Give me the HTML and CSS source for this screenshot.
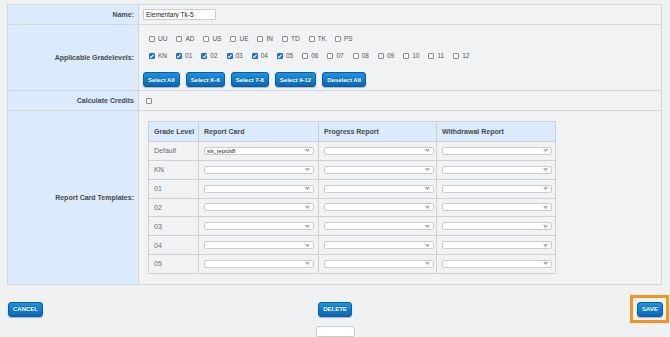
FILE: index.html
```html
<!DOCTYPE html>
<html lang="en">

<head>
  <meta charset="UTF-8" />
  <title>Report Card Group</title>
  <link rel="stylesheet" href="styles.css">
</head>

<body>
  <div class="page">
    <table class="form">
      <tr class="row-name">
        <th class="label">Name:</th>
        <td class="field"><input class="text-input" type="text" value="Elementary Tk-5"></td>
      </tr>
      <tr class="row-grades">
        <th class="label">Applicable Gradelevels:</th>
        <td class="field grades">
          <div class="cb-row">
            <label class="cb"><input type="checkbox">UU</label>
            <label class="cb"><input type="checkbox">AD</label>
            <label class="cb"><input type="checkbox">US</label>
            <label class="cb"><input type="checkbox">UE</label>
            <label class="cb"><input type="checkbox">IN</label>
            <label class="cb"><input type="checkbox">TD</label>
            <label class="cb"><input type="checkbox">TK</label>
            <label class="cb"><input type="checkbox">PS</label>
          </div>
          <div class="cb-row">
            <label class="cb"><input type="checkbox" checked>KN</label>
            <label class="cb"><input type="checkbox" checked>01</label>
            <label class="cb"><input type="checkbox" checked>02</label>
            <label class="cb"><input type="checkbox" checked>03</label>
            <label class="cb"><input type="checkbox" checked>04</label>
            <label class="cb"><input type="checkbox" checked>05</label>
            <label class="cb"><input type="checkbox">06</label>
            <label class="cb"><input type="checkbox">07</label>
            <label class="cb"><input type="checkbox">08</label>
            <label class="cb"><input type="checkbox">09</label>
            <label class="cb"><input type="checkbox">10</label>
            <label class="cb"><input type="checkbox">11</label>
            <label class="cb"><input type="checkbox">12</label>
          </div>
          <div class="btn-row">
            <button class="btn">Select All</button>
            <button class="btn">Select K-6</button>
            <button class="btn">Select 7-8</button>
            <button class="btn">Select 9-12</button>
            <button class="btn">Deselect All</button>
          </div>
        </td>
      </tr>
      <tr class="row-credits">
        <th class="label">Calculate Credits</th>
        <td class="field credits"><input type="checkbox"></td>
      </tr>
      <tr>
        <th class="label">Report Card Templates:</th>
        <td class="field templates">
          <table class="tpl">
            <colgroup>
              <col class="c-grade">
              <col class="c-card">
              <col class="c-prog">
              <col class="c-wd">
            </colgroup>
            <tr>
              <th>Grade Level</th>
              <th>Report Card</th>
              <th>Progress Report</th>
              <th>Withdrawal Report</th>
            </tr>
            <tr>
              <td>Default</td>
              <td><div class="sel"><select><option>sis_reprck8</option></select></div></td>
              <td><div class="sel"><select><option></option></select></div></td>
              <td><div class="sel"><select><option></option></select></div></td>
            </tr>
            <tr>
              <td>KN</td>
              <td><div class="sel"><select><option></option></select></div></td>
              <td><div class="sel"><select><option></option></select></div></td>
              <td><div class="sel"><select><option></option></select></div></td>
            </tr>
            <tr>
              <td>01</td>
              <td><div class="sel"><select><option></option></select></div></td>
              <td><div class="sel"><select><option></option></select></div></td>
              <td><div class="sel"><select><option></option></select></div></td>
            </tr>
            <tr>
              <td>02</td>
              <td><div class="sel"><select><option></option></select></div></td>
              <td><div class="sel"><select><option></option></select></div></td>
              <td><div class="sel"><select><option></option></select></div></td>
            </tr>
            <tr>
              <td>03</td>
              <td><div class="sel"><select><option></option></select></div></td>
              <td><div class="sel"><select><option></option></select></div></td>
              <td><div class="sel"><select><option></option></select></div></td>
            </tr>
            <tr>
              <td>04</td>
              <td><div class="sel"><select><option></option></select></div></td>
              <td><div class="sel"><select><option></option></select></div></td>
              <td><div class="sel"><select><option></option></select></div></td>
            </tr>
            <tr>
              <td>05</td>
              <td><div class="sel"><select><option></option></select></div></td>
              <td><div class="sel"><select><option></option></select></div></td>
              <td><div class="sel"><select><option></option></select></div></td>
            </tr>
          </table>
        </td>
      </tr>
    </table>

    <div class="actions">
      <div class="left">
        <button class="btn caps">Cancel</button>
      </div>
      <div class="middle">
        <button class="btn caps">Delete</button>
        <input class="small-input" type="text">
      </div>
      <div class="right">
        <span class="focus-box"><button class="btn caps">Save</button></span>
      </div>
    </div>
  </div>
</body>

</html>
```

FILE: styles.css
```css
body {
  margin: 0;
  background-color: #f0f1f3;
  color: #444;
  font-family: "Liberation Sans", Arial, sans-serif;
  font-size: 7px;
}

.page {
  padding: 4px 8px 0 7px;
}

/* main form table */
.form {
  width: 100%;
  border-collapse: collapse;
  border: 1px solid #d2d5d9;
}

.form > tbody > tr > th,
.form > tbody > tr > td {
  border: 1px solid #d2d5d9;
  padding: 0;
}

.label {
  width: 126px;
  background-color: #dcebfb;
  text-align: right;
  font-weight: bold;
  color: #454a50;
  padding-right: 4px !important;
}

.field {
  background-color: #f1f2f4;
  text-align: left;
}

.row-name {
  height: 20px;
}

.row-credits {
  height: 20px;
}

.text-input {
  display: block;
  box-sizing: border-box;
  margin-left: 4px;
  width: 73px;
  height: 11px;
  padding: 0 2px;
  border: 1px solid #c9ccd0;
  border-radius: 1px;
  background: #fff;
  font-family: "Liberation Sans", Arial, sans-serif;
  font-size: 6.5px;
  color: #222;
}

.grades {
  padding: 5px 0 3px 10px !important;
}

.cb-row {
  display: flex;
  align-items: center;
  height: 17px;
}

.cb {
  display: flex;
  align-items: center;
  gap: 3px;
  margin-right: 9px;
  font-size: 6.5px;
  color: #555;
}

/* small square checkbox */
input[type="checkbox"] {
  -webkit-appearance: none;
  appearance: none;
  position: relative;
  box-sizing: border-box;
  width: 6px;
  height: 6px;
  margin: 0;
  border: 1px solid #8a8d91;
  border-radius: 1px;
  background: #fff;
}

input[type="checkbox"]:checked {
  border-color: #1d6bd6;
  background: #2274e0;
}

input[type="checkbox"]:checked::before {
  content: "";
  position: absolute;
  left: 1.3px;
  top: 0;
  width: 1.2px;
  height: 2.6px;
  border-right: 1px solid #fff;
  border-bottom: 1px solid #fff;
  transform: rotate(40deg);
}

.btn-row {
  display: flex;
  gap: 6px;
  margin-top: 8px;
  margin-left: -6px;
}

.btn {
  height: 15px;
  padding: 0 4px;
  border: 1px solid #0a5c9e;
  border-radius: 3px;
  background: linear-gradient(#1f92e2, #0868b6);
  box-shadow: 0 1px 1px rgba(0, 0, 0, 0.25);
  color: #fff;
  font-family: "Liberation Sans", Arial, sans-serif;
  font-size: 6px;
  font-weight: bold;
  text-shadow: 0 -1px 0 rgba(0, 0, 0, 0.25);
}

.credits {
  padding-left: 7px !important;
}

.credits input[type="checkbox"] {
  display: block;
}

.templates {
  padding: 10px 0 10px 9px !important;
}

/* templates grid */
.tpl {
  width: 407px;
  table-layout: fixed;
  border-collapse: collapse;
  border: 1px solid #cdd0d4;
}

.tpl .c-grade {
  width: 50px;
}

.tpl .c-card {
  width: 120px;
}

.tpl .c-prog {
  width: 118px;
}

.tpl .c-wd {
  width: 119px;
}

.tpl th,
.tpl td {
  border: 1px solid #cdd0d4;
  text-align: left;
  height: 17.85px;
  padding: 0 4px 0 5px;
  white-space: nowrap;
}

.tpl th {
  background-color: #dcebfb;
  font-weight: bold;
  color: #454a50;
  height: 19px;
}

.tpl td {
  color: #6a6e73;
}

.sel {
  position: relative;
}

.sel select {
  display: block;
  box-sizing: border-box;
  width: 110px;
  height: 8px;
  padding: 0 2px;
  border: 1px solid #c9ccd0;
  border-radius: 2px;
  background: #fff;
  -webkit-appearance: none;
  appearance: none;
  font-family: "Liberation Sans", Arial, sans-serif;
  font-size: 5.5px;
  line-height: 6px;
  color: #222;
}

.sel::after {
  content: "";
  position: absolute;
  top: 1.5px;
  left: 102px;
  width: 2px;
  height: 2px;
  border-right: 1px solid #888;
  border-bottom: 1px solid #888;
  transform: rotate(45deg);
}

/* bottom actions */
.actions {
  display: grid;
  grid-template-columns: 1fr auto 1fr;
  align-items: start;
  margin-top: 17px;
  padding-left: 1px;
}

.middle {
  display: flex;
  flex-direction: column;
  align-items: center;
  gap: 9px;
}

.right {
  display: flex;
  justify-content: flex-end;
  margin-top: -7px;
  margin-right: -7px;
}

.caps {
  text-transform: uppercase;
  padding: 0 4px;
}

.focus-box {
  display: block;
  padding: 4px 3px 3px 4px;
  border: 3px solid #f7931e;
}

.focus-box .btn {
  display: block;
}

.small-input {
  box-sizing: border-box;
  width: 39px;
  height: 11px;
  border: 1px solid #c9ccd0;
  border-radius: 2px;
  background: #fff;
}
```
